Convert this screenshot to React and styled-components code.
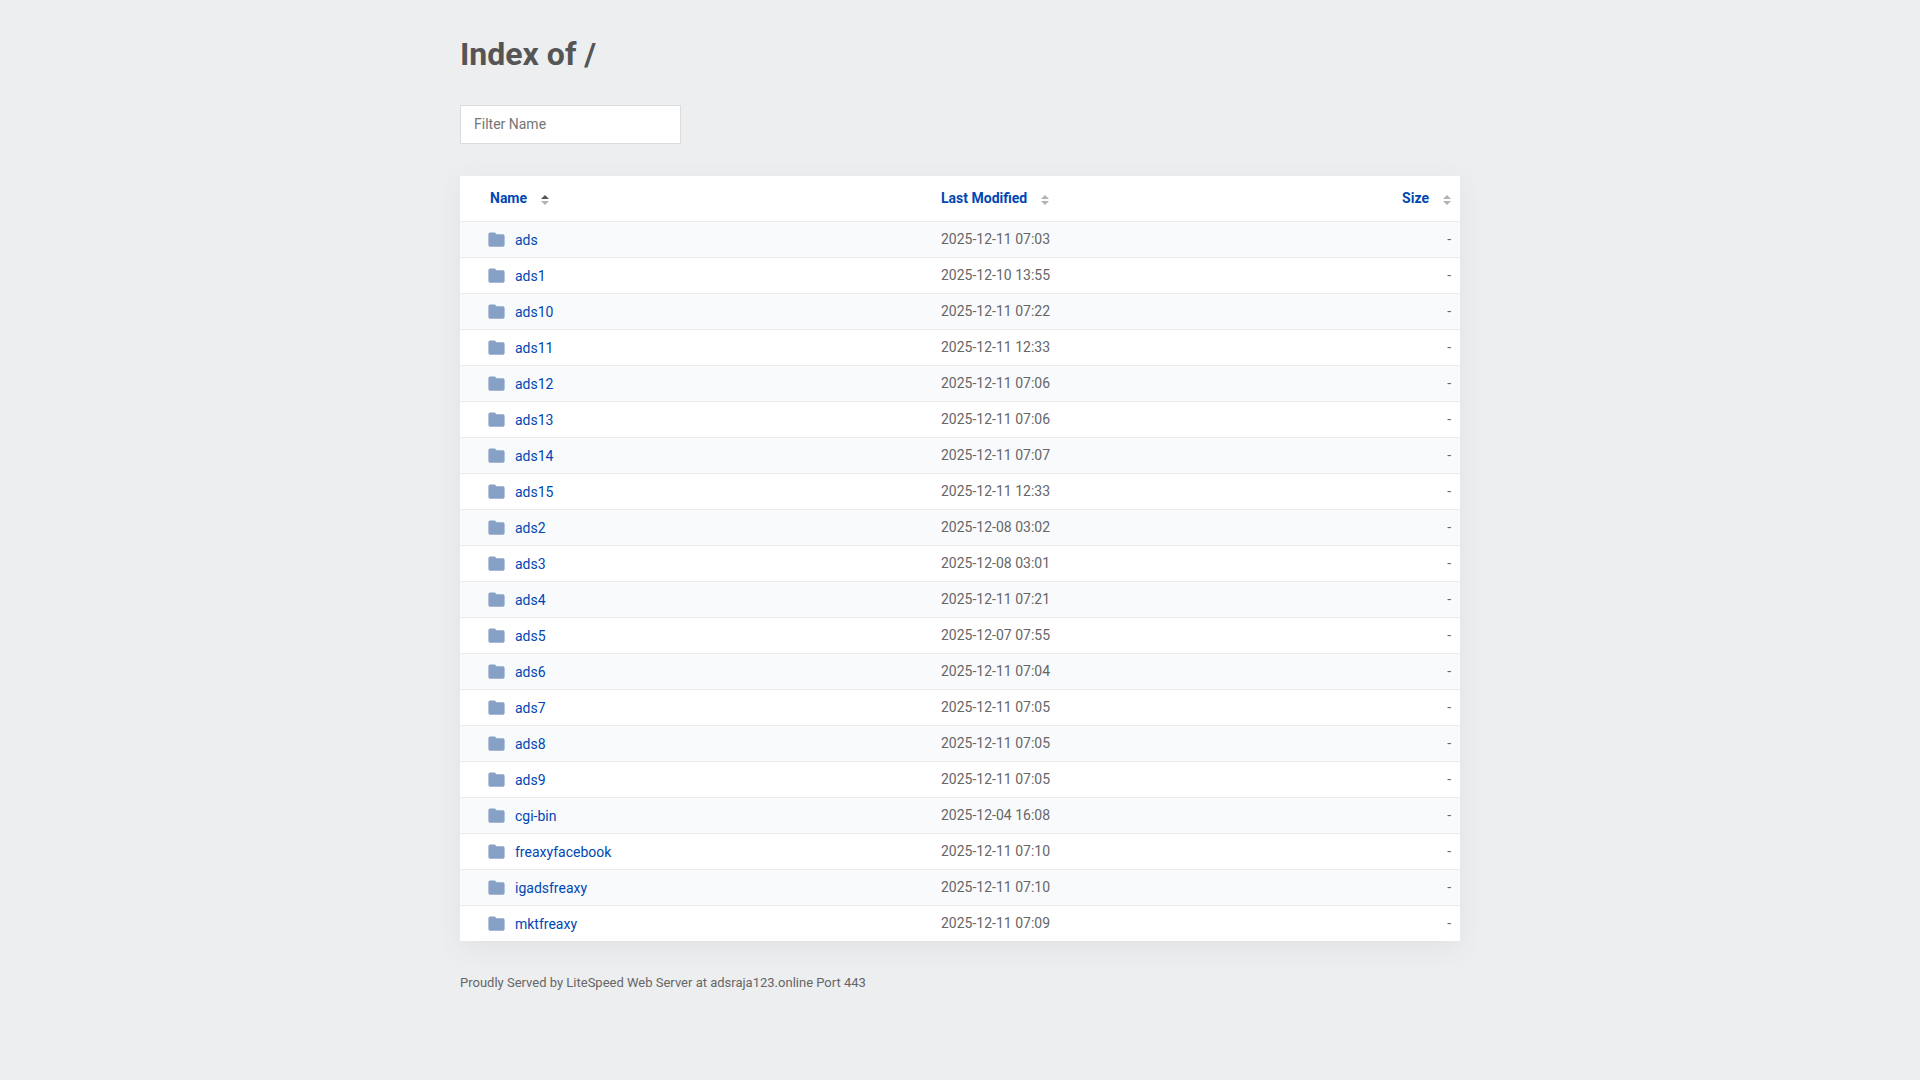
import React, { useState } from 'react';
import styled, { createGlobalStyle } from 'styled-components';

const GlobalStyle = createGlobalStyle`
  *, *::before, *::after {
    box-sizing: border-box;
  }

  body {
    margin: 0;
    background-color: #edeef0;
    color: #555;
    font-family: Roboto, 'Liberation Sans', sans-serif;
    font-size: 14px;
    line-height: 20px;
  }
`;

const Wrapper = styled.div`
  max-width: 1040px;
  margin: 0 auto;
  padding: 32px 20px 48px;
`;

const Title = styled.h1`
  margin: 0 0 29px;
  font-size: 32px;
  font-weight: 700;
  line-height: 44px;
`;

const FilterInput = styled.input`
  display: block;
  width: 221px;
  height: 39px;
  margin-bottom: 32px;
  padding: 0 13px 2px;
  border: 1px solid #dadcde;
  border-radius: 0;
  background: white;
  color: #555;
  font: inherit;
  outline: none;

  &::placeholder {
    color: #757575;
  }
`;

const Table = styled.table`
  width: 100%;
  table-layout: fixed;
  border-collapse: separate;
  border-spacing: 0;
  background: white;
  box-shadow: 0 7px 25px 0 rgba(50, 90, 90, 0.07);
`;

const HeadCell = styled.th`
  width: ${({ $width }) => $width};
  height: 45px;
  padding: ${({ $first }) => ($first ? '0 9px 1px 30px' : '0 9px 1px')};
  text-align: ${({ $right }) => ($right ? 'right' : 'left')};
`;

const SortButton = styled.button`
  display: inline-flex;
  align-items: center;
  gap: 14px;
  padding: 0;
  border: none;
  background: none;
  color: #0047b3;
  font: inherit;
  font-weight: 700;
  cursor: pointer;

  svg {
    display: block;
    margin-top: 3px;
  }
`;

const Row = styled.tr`
  &:nth-child(odd) {
    background-color: #f9fafc;
  }
`;

const Cell = styled.td`
  height: 36px;
  padding: ${({ $first }) => ($first ? '0 9px 0 28px' : '0 9px 2px')};
  border-top: 1px solid #e9ebec;
  color: #666;
  text-align: ${({ $right }) => ($right ? 'right' : 'left')};
`;

const FolderLink = styled.a`
  display: flex;
  align-items: center;
  gap: 10px;
  color: #0047b3;
  text-decoration: none;

  &:hover {
    text-decoration: underline;
  }

  svg {
    flex: none;
  }
`;

const Footer = styled.footer`
  margin-top: 32px;
  color: #666;
  font-size: 13px;
`;

const columns = [
  { key: 'name', label: 'Name', width: '47.2%' },
  { key: 'modified', label: 'Last Modified', width: '37.8%' },
  { key: 'size', label: 'Size', width: '15%', right: true },
];

const folders = [
  { name: 'ads', modified: '2025-12-11 07:03' },
  { name: 'ads1', modified: '2025-12-10 13:55' },
  { name: 'ads10', modified: '2025-12-11 07:22' },
  { name: 'ads11', modified: '2025-12-11 12:33' },
  { name: 'ads12', modified: '2025-12-11 07:06' },
  { name: 'ads13', modified: '2025-12-11 07:06' },
  { name: 'ads14', modified: '2025-12-11 07:07' },
  { name: 'ads15', modified: '2025-12-11 12:33' },
  { name: 'ads2', modified: '2025-12-08 03:02' },
  { name: 'ads3', modified: '2025-12-08 03:01' },
  { name: 'ads4', modified: '2025-12-11 07:21' },
  { name: 'ads5', modified: '2025-12-07 07:55' },
  { name: 'ads6', modified: '2025-12-11 07:04' },
  { name: 'ads7', modified: '2025-12-11 07:05' },
  { name: 'ads8', modified: '2025-12-11 07:05' },
  { name: 'ads9', modified: '2025-12-11 07:05' },
  { name: 'cgi-bin', modified: '2025-12-04 16:08' },
  { name: 'freaxyfacebook', modified: '2025-12-11 07:10' },
  { name: 'igadsfreaxy', modified: '2025-12-11 07:10' },
  { name: 'mktfreaxy', modified: '2025-12-11 07:09' },
];

const FolderIcon = () => (
  <svg width="17" height="16" viewBox="0 0 17 16" aria-hidden="true">
    <path
      fill="#86a0c6"
      d="M2 .6h4.4c.5 0 .8.2 1.100.5L8.400 2.300H15a1.600 1.600 0 0 1 1.600 1.600v9.200a1.600 1.600 0 0 1-1.600 1.600H2a1.600 1.600 0 0 1-1.600-1.600V2.200A1.600 1.600 0 0 1 2 .6z"
    />
  </svg>
);

const SortIcon = ({ direction }) => (
  <svg width="8" height="10" viewBox="0 0 8 10" aria-hidden="true">
    <path d="M4 0l4 4H0z" fill={direction === 'asc' ? '#555' : '#b2b2b2'} />
    <path d="M4 10L0 6h8z" fill={direction === 'desc' ? '#555' : '#b2b2b2'} />
  </svg>
);

const App = () => {
  const [filter, setFilter] = useState('');
  const [sort, setSort] = useState({ key: 'name', direction: 'asc' });

  const handleSort = (key) => {
    setSort((prev) => ({
      key,
      direction: prev.key === key && prev.direction === 'asc' ? 'desc' : 'asc',
    }));
  };

  const rows = folders
    .filter(({ name }) => name.toLowerCase().includes(filter.toLowerCase()))
    .sort((a, b) => {
      const order = (a[sort.key] || '').localeCompare(b[sort.key] || '');
      return sort.direction === 'asc' ? order : -order;
    });

  return (
    <>
      <GlobalStyle />
      <Wrapper>
        <Title>Index of /</Title>
        <FilterInput
          type="text"
          aria-label="Filter Name"
          placeholder="Filter Name"
          value={filter}
          onChange={(e) => setFilter(e.target.value)}
        />
        <Table>
          <thead>
            <tr>
              {columns.map(({ key, label, width, right }) => (
                <HeadCell key={key} $width={width} $right={right} $first={key === 'name'}>
                  <SortButton type="button" onClick={() => handleSort(key)}>
                    {label}
                    <SortIcon direction={sort.key === key ? sort.direction : null} />
                  </SortButton>
                </HeadCell>
              ))}
            </tr>
          </thead>
          <tbody>
            {rows.map(({ name, modified }) => (
              <Row key={name}>
                <Cell $first>
                  <FolderLink href={`/${name}/`}>
                    <FolderIcon />
                    {name}
                  </FolderLink>
                </Cell>
                <Cell>{modified}</Cell>
                <Cell $right>-</Cell>
              </Row>
            ))}
          </tbody>
        </Table>
        <Footer>Proudly Served by LiteSpeed Web Server at adsraja123.online Port 443</Footer>
      </Wrapper>
    </>
  );
};

export default App;
